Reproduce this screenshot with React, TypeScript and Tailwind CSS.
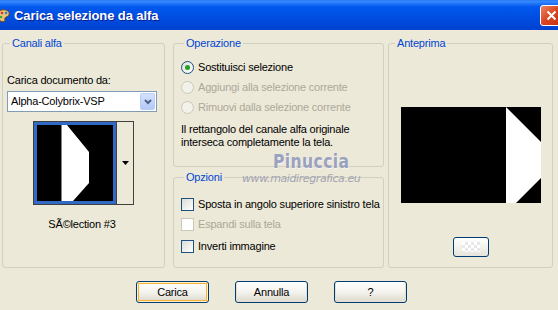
import React from 'react';

function Radio({ checked, disabled }: { checked?: boolean; disabled?: boolean }) {
  return (
    <span
      className={`w-[13px] h-[13px] rounded-full border flex items-center justify-center shrink-0 ${
        disabled ? 'border-[#CAC8BB] bg-[#F2F1EA]' : 'border-[#1C5180] bg-gradient-to-br from-[#DCDCD7] to-white'
      }`}
    >
      {checked && <span className="w-[5px] h-[5px] rounded-full bg-[#21A121]" />}
    </span>
  );
}

function Check({ disabled }: { disabled?: boolean }) {
  return (
    <span
      className={`w-[13px] h-[13px] border shrink-0 ${
        disabled ? 'border-[#CAC8BB] bg-white' : 'border-[#1C5180] bg-gradient-to-br from-[#DCDCD7] to-white'
      }`}
    />
  );
}

function XpButton({ label, isDefault }: { label: string; isDefault?: boolean }) {
  return (
    <button
      className={`w-[73px] h-[22px] rounded-[3px] border border-[#003C74] bg-gradient-to-b from-white via-[#F4F3EE] to-[#DCD9CC] text-[11px] text-black ${
        isDefault ? 'shadow-[inset_0_0_0_1px_#FFF0CF,inset_0_0_0_2px_#F8B330]' : 'shadow-[inset_0_-1px_0_1px_#E3E0D3]'
      }`}
    >
      {label}
    </button>
  );
}

export default function App() {
  return (
    <div className="w-[558px] h-[310px] bg-[#ECE9D8] flex flex-col overflow-hidden relative font-['Liberation_Sans',Arial,sans-serif] text-[11px] tracking-[-0.2px] text-black">
      {/* Title bar */}
      <div className="h-[30px] shrink-0 flex items-center bg-gradient-to-b from-[#3A8CFF] via-[#0058EE] via-20% to-[#0041D0] border-t border-[#2E7CF6]">
        <svg width="12" height="16" viewBox="0 0 12 16" className="ml-[-2px] mt-[1px]">
          <path d="M1 3 Q7 0 11 4 Q12 8 8 9 Q6 10 7 13 Q4 15 1 12 Z" fill="#E8C37A" stroke="#7A4B1C" strokeWidth="1" />
          <circle cx="4" cy="5" r="1.3" fill="#E0301E" />
          <circle cx="8" cy="5" r="1.3" fill="#2A7FE0" />
          <circle cx="3" cy="9" r="1.3" fill="#3DAA36" />
        </svg>
        <span className="ml-[4px] mt-[1px] text-white font-bold text-[13px] tracking-[-0.1px] [text-shadow:1px_1px_0_#0A1F8F]">
          Carica selezione da alfa
        </span>
        <div className="ml-auto mr-[-4px] w-[22px] h-[21px] rounded-[3px] border border-white bg-gradient-to-br from-[#E9815F] via-[#D9441F] to-[#C4300F] flex items-center justify-center">
          <svg width="11" height="11" viewBox="0 0 11 11">
            <path d="M1.5 1.5 L9.5 9.5 M9.5 1.5 L1.5 9.5" stroke="white" strokeWidth="2" />
          </svg>
        </div>
      </div>

      {/* Groups */}
      <div className="flex pt-[7px] pl-[2px]">
        <fieldset className="w-[163px] h-[231px] border border-[#D0D0BF] rounded-[3px] px-[4px]">
          <legend className="ml-[3px] px-[2px] text-[#0046D5] leading-[13px]">Canali alfa</legend>
          <div className="mt-[24px] leading-[13px]">Carica documento da:</div>
          <div className="mt-[4px] h-[21px] w-[150px] border border-[#7F9DB9] bg-white flex items-center">
            <span className="pl-[3px]">Alpha-Colybrix-VSP</span>
            <span className="ml-auto mr-[1px] w-[15px] h-[17px] rounded-[2px] border border-[#B9CDF5] bg-gradient-to-b from-[#D5E2FD] to-[#B4C8F6] flex items-center justify-center">
              <svg width="8" height="6" viewBox="0 0 8 6">
                <path d="M1 1 L4 4 L7 1" stroke="#4D6185" strokeWidth="2" fill="none" />
              </svg>
            </span>
          </div>
          <div className="mt-[9px] ml-[26px] w-[101px] h-[84px] border border-[#404040] bg-white flex">
            <div className="w-[82px] h-full border-[3px] border-[#316AC5] bg-black">
              <svg width="76" height="76" viewBox="0 0 76 76" className="block">
                <rect x="24" y="0" width="1" height="76" fill="#808080" />
                <polygon points="25,0 30,0 52,27 52,58 36,76 25,76" fill="white" />
              </svg>
            </div>
            <div className="flex-1 bg-[#ECE9D8] border-l border-[#404040] flex items-center justify-center">
              <svg width="7" height="4" viewBox="0 0 7 4">
                <polygon points="0,0 7,0 3.5,4" fill="black" />
              </svg>
            </div>
          </div>
          <div className="mt-[13px] text-center pr-[3px] leading-[13px]">SÃ©lection #3</div>
        </fieldset>

        <div className="ml-[8px] w-[211px] flex flex-col">
          <fieldset className="h-[130px] border border-[#D0D0BF] rounded-[3px] pl-[7px] whitespace-nowrap">
            <legend className="ml-[3px] px-[2px] text-[#0046D5] leading-[13px]">Operazione</legend>
            <div className="mt-[11px] flex flex-col gap-[7px]">
              <div className="flex items-center gap-[4px] h-[13px]">
                <Radio checked />
                <span>Sostituisci selezione</span>
              </div>
              <div className="flex items-center gap-[4px] h-[13px] text-[#ACA899]">
                <Radio disabled />
                <span>Aggiungi alla selezione corrente</span>
              </div>
              <div className="flex items-center gap-[4px] h-[13px] text-[#ACA899]">
                <Radio disabled />
                <span>Rimuovi dalla selezione corrente</span>
              </div>
            </div>
            <p className="mt-[9px] leading-[13px]">
              Il rettangolo del canale alfa originale
              <br />
              interseca completamente la tela.
            </p>
          </fieldset>
          <fieldset className="mt-[4px] h-[97px] border border-[#D0D0BF] rounded-[3px] pl-[7px] whitespace-nowrap">
            <legend className="ml-[3px] px-[2px] text-[#0046D5] leading-[13px]">Opzioni</legend>
            <div className="mt-[14px] flex flex-col">
              <div className="flex items-center gap-[4px] h-[13px]">
                <Check />
                <span>Sposta in angolo superiore sinistro tela</span>
              </div>
              <div className="mt-[7px] flex items-center gap-[4px] h-[13px] text-[#ACA899]">
                <Check disabled />
                <span>Espandi sulla tela</span>
              </div>
              <div className="mt-[9px] flex items-center gap-[4px] h-[13px]">
                <Check />
                <span>Inverti immagine</span>
              </div>
            </div>
          </fieldset>
        </div>

        <fieldset className="ml-[4px] w-[165px] h-[231px] border border-[#D0D0BF] rounded-[3px] flex flex-col items-center">
          <legend className="ml-[6px] px-[2px] text-[#0046D5] leading-[13px]">Anteprima</legend>
          <svg width="140" height="96" viewBox="0 0 140 96" className="mt-[57px] block">
            <rect width="140" height="96" fill="black" />
            <polygon points="105,0 140,35 140,71 115,96 105,96" fill="white" />
          </svg>
          <div className="mt-[34px] w-[36px] h-[20px] rounded-[3px] border border-[#003C74] bg-gradient-to-b from-white to-[#E6E4DA] flex items-center justify-center">
            <div className="w-[18px] h-[10px] bg-[repeating-conic-gradient(#E8E8E8_0_25%,#FFFFFF_0_50%)] bg-[length:6px_6px]" />
          </div>
        </fieldset>
      </div>

      {/* Buttons */}
      <div className="flex pl-[136px] mt-[13px] gap-[26px]">
        <XpButton label="Carica" isDefault />
        <XpButton label="Annulla" />
        <XpButton label="?" />
      </div>

      {/* Watermark */}
      <div className="absolute left-[273px] top-[151px] text-[20px] leading-[20px] font-bold tracking-[0.5px] text-[#9AA2BE] font-['DejaVu_Sans',sans-serif] [text-shadow:1px_1px_0_#F4F4F4] scale-x-[0.78] origin-left pointer-events-none">
        Pinuccia
      </div>
      <div className="absolute left-[242px] top-[173px] text-[11px] leading-[12px] italic tracking-[-0.4px] text-[#A3A3B3] font-['DejaVu_Sans',sans-serif] pointer-events-none">
        www.maidiregrafica.eu
      </div>
    </div>
  );
}
